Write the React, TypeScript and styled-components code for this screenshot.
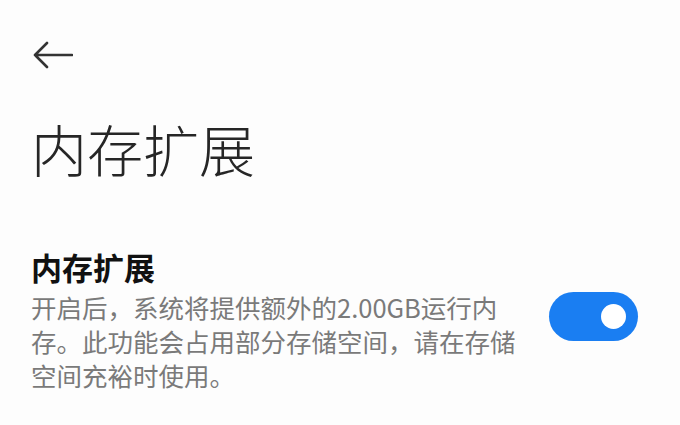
import styled, { createGlobalStyle } from "styled-components";

const GlobalStyle = createGlobalStyle`
    html, body {
        margin: 0;
        padding: 0;
        background: #fdfdfd;
    }
    body {
        font-family: "Noto Sans CJK SC", "Noto Sans", sans-serif;
    }
`;

function BackArrow() {
    return (
        <svg width="40" height="28" viewBox="0 0 40 28" fill="none">
            <path
                d="M2 14 H39 M14 2 L2 14 L14 26"
                stroke="#333"
                strokeWidth="2.6"
                strokeLinecap="round"
                strokeLinejoin="round"
            />
        </svg>
    );
}

function App() {
    return (
        <S.Page>
            <GlobalStyle />
            <S.Header>
                <S.BackButton>
                    <BackArrow />
                </S.BackButton>
            </S.Header>
            <S.Title>内存扩展</S.Title>
            <S.Item>
                <S.ItemText>
                    <S.ItemTitle>内存扩展</S.ItemTitle>
                    <S.ItemDesc>
                        {"开启后，系统将提供额外的2.00GB运行内\n存。此功能会占用部分存储空间，请在存储\n空间充裕时使用。"}
                    </S.ItemDesc>
                </S.ItemText>
                <S.Switch $on={true}>
                    <S.Knob />
                </S.Switch>
            </S.Item>
        </S.Page>
    );
}

const S = {
    Page: styled.div`
        width: 680px;
        height: 425px;
        overflow: hidden;
        background: #fdfdfd;
        padding: 0 42px 0 31px;
        box-sizing: border-box;
        display: flex;
        flex-direction: column;
    `,
    Header: styled.div`
        display: flex;
        align-items: center;
        height: 28px;
        margin-top: 41px;
    `,
    BackButton: styled.div`
        display: flex;
        padding-left: 2px;
    `,
    Title: styled.h1`
        margin: 39px 0 0 0;
        font-size: 56px;
        font-weight: 300;
        line-height: 80px;
        color: #262626;
    `,
    Item: styled.div`
        display: flex;
        align-items: center;
        justify-content: space-between;
        margin-top: 59px;
    `,
    ItemText: styled.div`
        display: flex;
        flex-direction: column;
        gap: 3px;
    `,
    ItemTitle: styled.div`
        font-size: 31px;
        font-weight: 700;
        line-height: 40px;
        color: #111;
    `,
    ItemDesc: styled.div`
        font-size: 25.5px;
        line-height: 34px;
        color: #7a7a7a;
        white-space: pre-line;
    `,
    Switch: styled.div<{ $on: boolean }>`
        width: 89px;
        height: 49px;
        border-radius: 25px;
        background: ${(p) => (p.$on ? "#1a7ef2" : "#d6d6d6")};
        display: flex;
        align-items: center;
        justify-content: ${(p) => (p.$on ? "flex-end" : "flex-start")};
        padding: 0 12px;
        box-sizing: border-box;
        flex-shrink: 0;
        margin-top: -6px;
    `,
    Knob: styled.div`
        width: 25px;
        height: 25px;
        border-radius: 50%;
        background: #fff;
    `,
};

export default App;
